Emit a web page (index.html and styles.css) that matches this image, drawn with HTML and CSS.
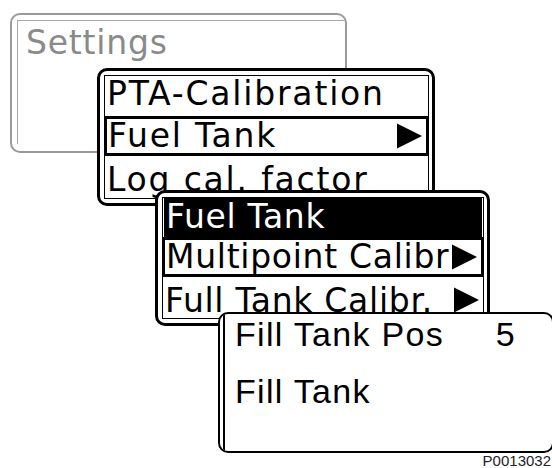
FILE: index.html
```html
<!DOCTYPE html>
<html lang="en">
<head>
    <meta charset="UTF-8">
    <title>Fuel Tank menu</title>
    <link rel="stylesheet" href="styles.css">
</head>
<body>
    <div class="stage">
        <div class="screen screen-settings">
            <div class="inner inner-settings">
                <div class="title">Settings</div>
            </div>
        </div>

        <div class="screen screen-menu">
            <div class="inner">
                <div class="row">PTA-Calibration</div>
                <div class="row selected">
                    <span>Fuel Tank</span>
                    <svg class="arrow" viewBox="0 0 26 26"><polygon points="0,0 26,13 0,26"/></svg>
                </div>
                <div class="row last">Log cal. factor</div>
            </div>
        </div>

        <div class="screen screen-tank">
            <div class="inner">
                <div class="row heading">Fuel Tank</div>
                <div class="row selected">
                    <span>Multipoint Calibr</span>
                    <svg class="arrow" viewBox="0 0 26 26"><polygon points="0,0 26,13 0,26"/></svg>
                </div>
                <div class="row last">
                    <span>Full Tank Calibr.</span>
                    <svg class="arrow" viewBox="0 0 26 26"><polygon points="0,0 26,13 0,26"/></svg>
                </div>
            </div>
        </div>

        <div class="screen screen-fill">
            <div class="inner inner-fill">
                <div class="fill-row">
                    <span>Fill Tank Pos</span>
                    <span class="value">5</span>
                </div>
                <div class="fill-row">Fill Tank</div>
            </div>
        </div>

        <div class="code">P0013032</div>
    </div>
</body>
</html>
```

FILE: styles.css
```css
body {
    margin: 0;
    background: #fff;
    font-family: "DejaVu Sans", Verdana, sans-serif;
    color: #000;
}
.stage {
    position: relative;
    width: 552px;
    height: 468px;
    overflow: hidden;
}
.screen {
    position: absolute;
    background: #fff;
    box-sizing: border-box;
    border: 3px solid #000;
    border-radius: 10px;
    padding: 4px 3px 4px 4px;
    overflow: hidden;
}
.inner {
    height: 100%;
    box-sizing: border-box;
    border: 1px solid #000;
}
.screen-settings {
    left: 10px;
    top: 13px;
    width: 337px;
    height: 140px;
    border: 2px solid #9a9a9a;
    padding: 5px 0 7px 5px;
}
.inner-settings {
    border: none;
    border-left: 1px solid #a8a8a8;
    border-top: 1px solid #a8a8a8;
}
.title {
    color: #8a8a8a;
    font-size: 33px;
    line-height: 36px;
    padding: 4px 0 0 8px;
    letter-spacing: 0.8px;
}
.screen-menu {
    left: 97px;
    top: 68px;
    width: 338px;
    height: 138px;
}
.screen-tank {
    left: 155px;
    top: 190px;
    width: 335px;
    height: 136px;
}
.row {
    display: flex;
    align-items: center;
    justify-content: space-between;
    height: 40px;
    box-sizing: border-box;
    padding: 0 4px 6px 2px;
    font-size: 33px;
    white-space: nowrap;
}
.screen-menu .row {
    letter-spacing: 1.8px;
}
.screen-tank .row {
    letter-spacing: 0.7px;
}
.row.selected {
    border: 3px solid #000;
    margin: 0 -1px;
    padding: 0 4px 1px 1px;
}
.row.last {
    padding-top: 6px;
    padding-bottom: 0;
}
.row.heading {
    background: #000;
    color: #fff;
    margin: 0 1px;
    height: 39px;
    padding-bottom: 3px;
}
.arrow {
    width: 25px;
    height: 26px;
    flex: none;
}
.screen-fill {
    left: 218px;
    top: 312px;
    width: 336px;
    height: 141px;
    border-width: 2px;
    padding: 0 0 0 3px;
}
.inner-fill {
    border: none;
    border-left: 2px solid #000;
    padding: 0 36px 0 10px;
}
.fill-row {
    display: flex;
    justify-content: space-between;
    font-family: "Liberation Sans", Arial, sans-serif;
    font-size: 34px;
    line-height: 40px;
    height: 57px;
    letter-spacing: 1.3px;
}
.code {
    position: absolute;
    right: 1px;
    bottom: 0;
    font-family: "Liberation Sans", Arial, sans-serif;
    font-size: 15px;
    line-height: 14px;
    color: #222;
}
```
